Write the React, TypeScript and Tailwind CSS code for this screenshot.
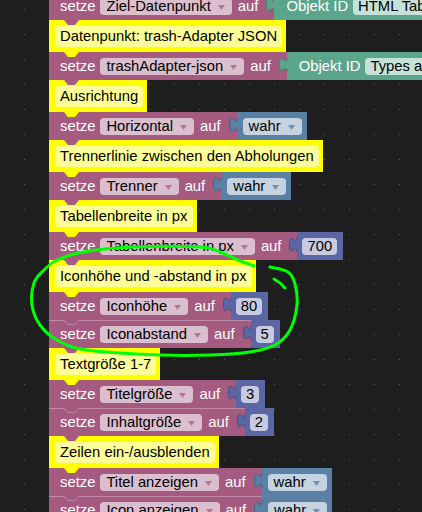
import React from 'react';

type Kind = 'bool' | 'num' | 'obj';

type Row =
  | { type: 'comment'; text: string }
  | { type: 'set'; name: string; kind: Kind; value: string };

const rows: Row[] = [
  { type: 'set', name: 'Ziel-Datenpunkt', kind: 'obj', value: 'HTML Tabelle' },
  { type: 'comment', text: 'Datenpunkt: trash-Adapter JSON' },
  { type: 'set', name: 'trashAdapter-json', kind: 'obj', value: 'Types as JSON' },
  { type: 'comment', text: 'Ausrichtung' },
  { type: 'set', name: 'Horizontal', kind: 'bool', value: 'wahr' },
  { type: 'comment', text: 'Trennerlinie zwischen den Abholungen' },
  { type: 'set', name: 'Trenner', kind: 'bool', value: 'wahr' },
  { type: 'comment', text: 'Tabellenbreite in px' },
  { type: 'set', name: 'Tabellenbreite in px', kind: 'num', value: '700' },
  { type: 'comment', text: 'Iconhöhe und -abstand in px' },
  { type: 'set', name: 'Iconhöhe', kind: 'num', value: '80' },
  { type: 'set', name: 'Iconabstand', kind: 'num', value: '5' },
  { type: 'comment', text: 'Textgröße 1-7' },
  { type: 'set', name: 'Titelgröße', kind: 'num', value: '3' },
  { type: 'set', name: 'Inhaltgröße', kind: 'num', value: '2' },
  { type: 'comment', text: 'Zeilen ein-/ausblenden' },
  { type: 'set', name: 'Titel anzeigen', kind: 'bool', value: 'wahr' },
  { type: 'set', name: 'Icon anzeigen', kind: 'bool', value: 'wahr' },
];

const kindStyle: Record<Kind, { block: string; fill: string; field: string; arrow: string }> = {
  bool: { block: 'bg-[#5b80a5] pl-[6px] pr-[5px]', fill: '#5b80a5', field: 'bg-[#c5d3e1] pl-[6px] pr-[7px]', arrow: '#6f92b5' },
  num: { block: 'bg-[#5b67a5] pl-[5px] pr-[6px]', fill: '#5b67a5', field: 'bg-[#c7cae1] px-[5px]', arrow: '' },
  obj: { block: 'bg-[#5ba58c] pl-[12px] pr-[6px]', fill: '#5ba58c', field: 'bg-[#c6e2d8] px-[5px] ml-[5px]', arrow: '' },
};

// next-statement tab hanging below a block
function Tab({ color }: { color: string }) {
  return (
    <div
      className={`absolute left-[15px] -bottom-[5px] z-20 h-[5px] w-[15px] [clip-path:polygon(0_0,100%_0,73%_100%,27%_100%)] ${color}`}
    />
  );
}

function Arrow({ fill }: { fill: string }) {
  return (
    <svg width="7" height="5" viewBox="0 0 7 5" className="ml-[7px] mt-[2px]">
      <path d="M0,0 H7 L3.5,5 Z" fill={fill} />
    </svg>
  );
}

function Comment({ text, next }: { text: string; next: boolean }) {
  return (
    <div className="relative shrink-0 bg-[#ffff00] pl-[6px] pr-[4px] pt-[6px] pb-[5px]">
      <div className="flex h-[21px] items-center rounded-[4px] bg-[#ffff99] px-[5px] text-black">{text}</div>
      {next && <Tab color="bg-[#ffff00]" />}
    </div>
  );
}

function ValueBlock({ kind, value }: { kind: Kind; value: string }) {
  const s = kindStyle[kind];
  return (
    <div className={`relative flex items-center ${s.block}`}>
      <svg className="absolute -left-[8px] top-[5px]" width="9" height="16" viewBox="0 0 9 16">
        <path d="M8,0 C8,10 0,-8 0,7.5 C0,23 8,5 8,15 L9,15 L9,0 Z" fill={s.fill} />
        <path d="M8,0.5 C8,10 0.5,-7 0.5,7.5 C0.5,22 8,5 8,15" fill="none" stroke="rgba(0,0,0,0.22)" strokeWidth="1" />
      </svg>
      {kind === 'obj' && <span className="text-white">Objekt ID</span>}
      <div className={`flex h-[17px] items-center rounded-[4px] text-black ${s.field}`}>
        <span>{value}</span>
        {kind === 'bool' && <Arrow fill={s.arrow} />}
      </div>
    </div>
  );
}

function SetRow({ name, kind, value, afterSet, nextComment }: { name: string; kind: Kind; value: string; afterSet: boolean; nextComment: boolean }) {
  return (
    <div className="relative flex h-[28px] shrink-0">
      <div className="relative flex items-center bg-[#a55b80] pl-[11px] pr-[16px] text-white">
        {afterSet && (
          <>
            <div className="absolute left-0 right-0 top-0 h-px bg-[#c08aa6]" />
            <svg className="absolute left-[15px] top-0" width="15" height="6" viewBox="0 0 15 6">
              <path d="M0,0 H15 L11,4 H4 Z" fill="#a55b80" />
              <path d="M0,0.5 L4,4.5 H11 L15,0.5" fill="none" stroke="#c08aa6" strokeWidth="1" />
            </svg>
          </>
        )}
        <span>setze</span>
        <div className="ml-[5px] flex h-[17px] items-center rounded-[4px] bg-[#dbbfce] pl-[6px] pr-[7px] text-black">
          <span>{name}</span>
          <Arrow fill="#b27696" />
        </div>
        <span className="ml-[6px]">auf</span>
        {nextComment && <Tab color="bg-[#a55b80]" />}
      </div>
      <ValueBlock kind={kind} value={value} />
    </div>
  );
}

// catmull-rom through points -> smooth svg path
function smooth(pts: [number, number][]) {
  let d = `M${pts[0][0]},${pts[0][1]}`;
  for (let i = 0; i < pts.length - 1; i++) {
    const p0 = pts[i - 1] || pts[i];
    const p1 = pts[i];
    const p2 = pts[i + 1];
    const p3 = pts[i + 2] || p2;
    const c1x = p1[0] + (p2[0] - p0[0]) / 6;
    const c1y = p1[1] + (p2[1] - p0[1]) / 6;
    const c2x = p2[0] - (p3[0] - p1[0]) / 6;
    const c2y = p2[1] - (p3[1] - p1[1]) / 6;
    d += ` C${c1x.toFixed(1)},${c1y.toFixed(1)} ${c2x.toFixed(1)},${c2y.toFixed(1)} ${p2[0]},${p2[1]}`;
  }
  return d;
}

const loop: [number, number][] = [
  [254, 266], [238, 260], [220, 252], [200, 247], [133, 247], [83, 252], [57, 260], [44, 270],
  [34, 283], [32, 305], [40, 325], [57, 340], [87, 350], [160, 355], [211, 355], [250, 352],
  [275, 345], [290, 330], [297, 305], [295, 284], [288, 272], [270, 267],
];

export default function App() {
  return (
    <div className="relative h-[512px] w-[422px] overflow-hidden whitespace-nowrap bg-[#1e1e1e] font-['Liberation_Sans',Arial,sans-serif] text-[14.8px] leading-none">
      <svg className="absolute inset-0" width="422" height="512">
        <defs>
          <pattern id="dots" x="24" y="9" width="25" height="25" patternUnits="userSpaceOnUse">
            <rect x="0" y="0" width="1" height="1" fill="#626262" />
          </pattern>
        </defs>
        <rect width="422" height="512" fill="url(#dots)" />
      </svg>

      <div className="relative -mt-[8px] flex flex-col items-start pl-[49px]">
        {rows.map((r, i) => {
          const next = rows[i + 1];
          const prev = rows[i - 1];
          if (r.type === 'comment') {
            return <Comment key={i} text={r.text} next={!!next && next.type === 'set'} />;
          }
          return (
            <SetRow
              key={i}
              name={r.name}
              kind={r.kind}
              value={r.value}
              afterSet={!!prev && prev.type === 'set'}
              nextComment={!!next && next.type === 'comment'}
            />
          );
        })}
      </div>

      {/* hand drawn marker */}
      <svg className="pointer-events-none absolute inset-0 z-30" width="422" height="512" viewBox="0 0 422 512">
        <path d={smooth(loop)} fill="none" stroke="#0f0" strokeWidth="3" strokeLinecap="round" strokeLinejoin="round" />
        <path d="M274,279 Q280,282 285,288" fill="none" stroke="#0f0" strokeWidth="3" strokeLinecap="round" />
      </svg>
    </div>
  );
}
